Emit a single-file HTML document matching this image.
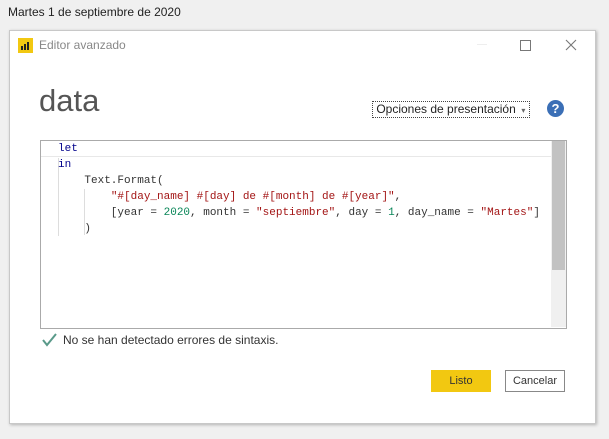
<!DOCTYPE html>
<html><head><style>
body{margin:0;width:609px;height:439px;background:#f0f0f0;position:relative;overflow:hidden;font-family:"Liberation Sans",sans-serif}
.a{position:absolute}
.code{font-family:"Liberation Mono",monospace;font-size:11px;white-space:pre;line-height:16px}
</style></head><body>
<div class="a" style="left:8px;top:5px;font-size:12px;color:#222">Martes 1 de septiembre de 2020</div>
<div class="a" style="left:9px;top:30px;width:585px;height:392px;background:#fff;border:1px solid #c8c8c8;box-shadow:1px 1px 3px rgba(0,0,0,.25)"></div>
<div class="a" style="left:18px;top:38px;width:15px;height:15px;background:#f2c811"></div>
<svg class="a" style="left:18px;top:38px" width="15" height="15"><rect x="3" y="8" width="2" height="4" fill="#222"/><rect x="6" y="6" width="2" height="6" fill="#222"/><rect x="9" y="4" width="2" height="8" fill="#222"/></svg>
<div class="a" style="left:39px;top:38px;font-size:12px;color:#888">Editor avanzado</div>
<div class="a" style="left:477px;top:44px;width:10px;height:1px;background:#eee"></div>
<div class="a" style="left:520px;top:40px;width:9px;height:9px;border:1px solid #777"></div>
<svg class="a" style="left:565px;top:39px" width="12" height="12"><path d="M1 1L11 11M11 1L1 11" stroke="#777" stroke-width="1.1"/></svg>
<div class="a" style="left:39px;top:83px;font-size:31px;color:#555;font-weight:300">data</div>
<div class="a" style="left:372px;top:101px;width:156px;height:15px;border:1px dotted #444;font-size:12px;color:#222;line-height:15px">&nbsp;Opciones de presentación <span style="font-size:8px;color:#666">&nbsp;▾</span></div>
<div class="a" style="left:547px;top:100px;width:17px;height:17px;border-radius:50%;background:#3b6fb6;color:#fff;font-weight:bold;font-size:13px;text-align:center;line-height:17px">?</div>
<div class="a" style="left:40px;top:140px;width:525px;height:187px;border:1px solid #aaa;background:#fff"></div>
<div class="a" style="left:41px;top:141px;width:510px;height:15px;border-bottom:1px solid #e8e8e8"></div>
<div class="a" style="left:551px;top:141px;width:15px;height:186px;background:#f0f0f0"></div>
<div class="a" style="left:552px;top:141px;width:13px;height:129px;background:#c2c2c2"></div>
<div class="a" style="left:58px;top:158px;width:1px;height:78px;background:#ddd"></div>
<div class="a" style="left:84px;top:189px;width:1px;height:46px;background:#ddd"></div>
<div class="a code" style="left:58px;top:141px;color:#333"><span style="color:#00008b">let</span>
<span style="color:#00008b">in</span>
    Text.Format(
        <span style="color:#a31515">"#[day_name] #[day] de #[month] de #[year]"</span>,
        [year = <span style="color:#098658">2020</span>, month = <span style="color:#a31515">"septiembre"</span>, day = <span style="color:#098658">1</span>, day_name = <span style="color:#a31515">"Martes"</span>]
    )</div>
<svg class="a" style="left:42px;top:333px" width="15" height="14"><path d="M1 7L5 12L14 1" stroke="#5a9a8a" stroke-width="2" fill="none"/></svg>
<div class="a" style="left:63px;top:333px;font-size:12px;color:#333">No se han detectado errores de sintaxis.</div>
<div class="a" style="left:431px;top:370px;width:60px;height:22px;background:#f2c811;font-size:11px;color:#333;text-align:center;line-height:22px">Listo</div>
<div class="a" style="left:505px;top:370px;width:58px;height:20px;border:1px solid #888;background:#fff;font-size:11px;color:#333;text-align:center;line-height:20px">Cancelar</div>
</body></html>
